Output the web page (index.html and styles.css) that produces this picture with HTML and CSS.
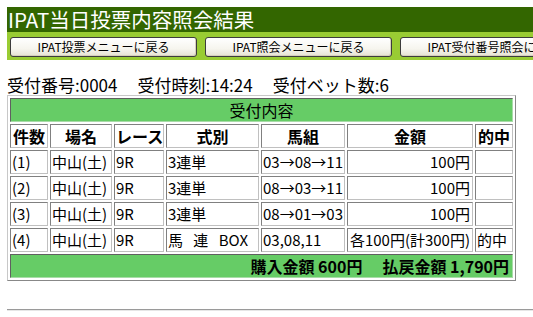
FILE: index.html
```html
<!DOCTYPE html>
<html lang="ja">
<head>
<meta charset="utf-8">
<title>IPAT当日投票内容照会結果</title>
<link rel="stylesheet" href="styles.css">
</head>
<body>
<header class="header">
  <h1 class="title">IPAT当日投票内容照会結果</h1>
  <nav class="nav">
    <button class="btn" type="button">IPAT投票メニューに戻る</button>
    <button class="btn" type="button">IPAT照会メニューに戻る</button>
    <button class="btn" type="button">IPAT受付番号照会に戻る</button>
  </nav>
</header>
<p class="info"><span>受付番号:0004</span><span>受付時刻:14:24</span><span>受付ベット数:6</span></p>
<table class="result">
  <colgroup>
    <col class="c-no"><col class="c-place"><col class="c-race"><col class="c-type"><col class="c-combo"><col class="c-amount"><col class="c-hit">
  </colgroup>
  <tr><td class="caption" colspan="7">受付内容</td></tr>
  <tr class="head"><th>件数</th><th>場名</th><th>レース</th><th>式別</th><th>馬組</th><th>金額</th><th>的中</th></tr>
  <tr><td>(1)</td><td>中山(土)</td><td>9R</td><td>3連単</td><td>03→08→11</td><td class="amt">100円</td><td></td></tr>
  <tr><td>(2)</td><td>中山(土)</td><td>9R</td><td>3連単</td><td>08→03→11</td><td class="amt">100円</td><td></td></tr>
  <tr><td>(3)</td><td>中山(土)</td><td>9R</td><td>3連単</td><td>08→01→03</td><td class="amt">100円</td><td></td></tr>
  <tr><td>(4)</td><td>中山(土)</td><td>9R</td><td class="spaced">馬 連 BOX</td><td>03,08,11</td><td class="amt">各100円(計300円)</td><td>的中</td></tr>
  <tr><td class="total" colspan="7"><span>購入金額 600円</span><span class="pay">払戻金額 1,790円</span></td></tr>
</table>
<hr class="rule">
</body>
</html>
```
FILE: styles.css
```css
html {
  overflow: hidden;
}
body {
  margin: 7px 0 0 7px;
  font-family: "Noto Sans CJK JP", "Noto Sans", sans-serif;
  color: #000;
  background: #fff;
}
.title {
  margin: 0;
  height: 25px;
  padding-left: 1px;
  background: #336600;
  color: #fff;
  font-size: 20.5px;
  font-weight: normal;
  line-height: 25px;
  white-space: nowrap;
}
.nav {
  display: flex;
  gap: 8px;
  height: 20px;
  padding: 5px 0 3px 3px;
  background: #99cc33;
  overflow: hidden;
}
.btn {
  flex: 0 0 187px;
  height: 20px;
  padding: 0;
  border: 1px solid #3c3c3c;
  border-radius: 3px;
  background: linear-gradient(#ffffff, #f6f5ee 60%, #e6e3d3);
  box-shadow: inset -1px -1px 0 #d6d0bd;
  font-family: "Noto Sans CJK JP", sans-serif;
  font-size: 12px;
  line-height: 18px;
  color: #000;
  white-space: nowrap;
}
.info {
  display: flex;
  gap: 20px;
  margin: 16px 0 1px;
  font-size: 17px;
  line-height: 18px;
}
.result {
  box-sizing: border-box;
  width: 509px;
  table-layout: fixed;
  border-collapse: separate;
  border-spacing: 2px;
  border: 1px solid;
  border-color: #c8c8c8 #888 #888 #c8c8c8;
  font-size: 15px;
}
.c-no { width: 38px; }
.c-place { width: 62px; }
.c-race { width: 50px; }
.c-type { width: 93px; }
.c-combo { width: 84px; }
.c-amount { width: 126px; }
.c-hit { width: 38px; }
.result th,
.result td {
  height: 22px;
  padding: 0 1px;
  border: 1px solid;
  border-color: #808080 #c0c0c0 #c0c0c0 #808080;
  line-height: 22px;
  white-space: nowrap;
  overflow: hidden;
  text-align: left;
}
.result .head th {
  font-size: 16px;
  font-weight: bold;
  text-align: center;
}
.result .caption,
.result .total {
  background: #66cc66;
  border-color: #606060 #a8dca8 #a8dca8 #606060;
  font-size: 16px;
}
.result .caption {
  text-align: center;
}
.result .total {
  text-align: right;
  font-weight: bold;
  padding-right: 3px;
}
.pay {
  margin-left: 20px;
}
.result .amt {
  text-align: right;
  padding-right: 2px;
}
.spaced {
  word-spacing: 7px;
}
.rule {
  margin: 28px 0 0;
  border: 0;
  border-top: 1px solid #9a9a9a;
  border-bottom: 1px solid #e6e6e6;
  height: 0;
}
```
